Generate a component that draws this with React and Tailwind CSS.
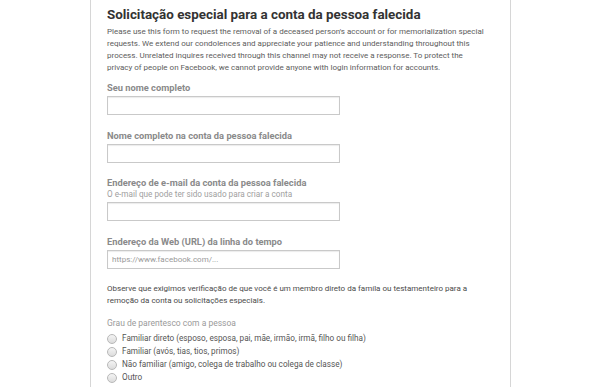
const FONT = { fontFamily: 'Roboto, "Liberation Sans", sans-serif' };

function Field({ label, hint, placeholder, className }) {
  return (
    <div className={className}>
      <p className="text-[9.3px] leading-[12px] font-bold text-[#8a8a8a]">{label}</p>
      {hint && <p className="text-[8.2px] leading-[11px] text-[#a0a0a0]">{hint}</p>}
      <input
        className="mt-[2px] block w-[233px] h-[19px] border border-[#c9c9c9] shadow-[inset_0_1px_1px_rgba(0,0,0,0.08)] px-[4px] text-[8px] text-[#888] placeholder:text-[#999] outline-none"
        placeholder={placeholder}
      />
    </div>
  );
}

const OPTIONS = [
  'Familiar direto (esposo, esposa, pai, mãe, irmão, irmã, filho ou filha)',
  'Familiar (avós, tias, tios, primos)',
  'Não familiar (amigo, colega de trabalho ou colega de classe)',
  'Outro',
];

export default function App() {
  return (
    <div className="w-[600px] h-[387px] bg-white overflow-hidden" style={FONT}>
      <div className="ml-[90px] w-[421px] h-full border-x border-[#d6d6d6] pl-[16px] pr-[20px] pt-[6px]">
        <h1 className="text-[13.4px] leading-[18px] font-bold text-[#333]">
          Solicitação especial para a conta da pessoa falecida
        </h1>
        <p className="mt-[2px] text-[8px] leading-[12px] text-[#5c5c5c]">
          Please use this form to request the removal of a deceased person's account or for memorialization special
          requests. We extend our condolences and appreciate your patience and understanding throughout this
          process. Unrelated inquires received through this channel may not receive a response. To protect the
          privacy of people on Facebook, we cannot provide anyone with login information for accounts.
        </p>

        <Field className="mt-[8px]" label="Seu nome completo" />
        <Field className="mt-[15px]" label="Nome completo na conta da pessoa falecida" />
        <Field
          className="mt-[14px]"
          label="Endereço de e-mail da conta da pessoa falecida"
          hint="O e-mail que pode ter sido usado para criar a conta"
        />
        <Field
          className="mt-[15px]"
          label="Endereço da Web (URL) da linha do tempo"
          placeholder="https://www.facebook.com/..."
        />

        <p className="mt-[14px] text-[8px] leading-[12px] text-[#4a4a4a]">
          Observe que exigimos verificação de que você é um membro direto da famíla ou testamenteiro para a
          remoção da conta ou solicitações especiais.
        </p>

        <p className="mt-[10px] text-[8.5px] leading-[12px] text-[#9a9a9a]">
          Grau de parentesco com a pessoa
        </p>
        <div className="mt-[3px]">
          {OPTIONS.map(o => (
            <label key={o} className="flex items-center h-[13px] text-[8.2px] text-[#555]">
              <span className="w-[10px] h-[10px] rounded-full border border-[#b8b8b8] bg-gradient-to-b from-[#f4f4f4] to-[#dcdcdc] mr-[5px] shrink-0" />
              {o}
            </label>
          ))}
        </div>
      </div>
    </div>
  );
}
